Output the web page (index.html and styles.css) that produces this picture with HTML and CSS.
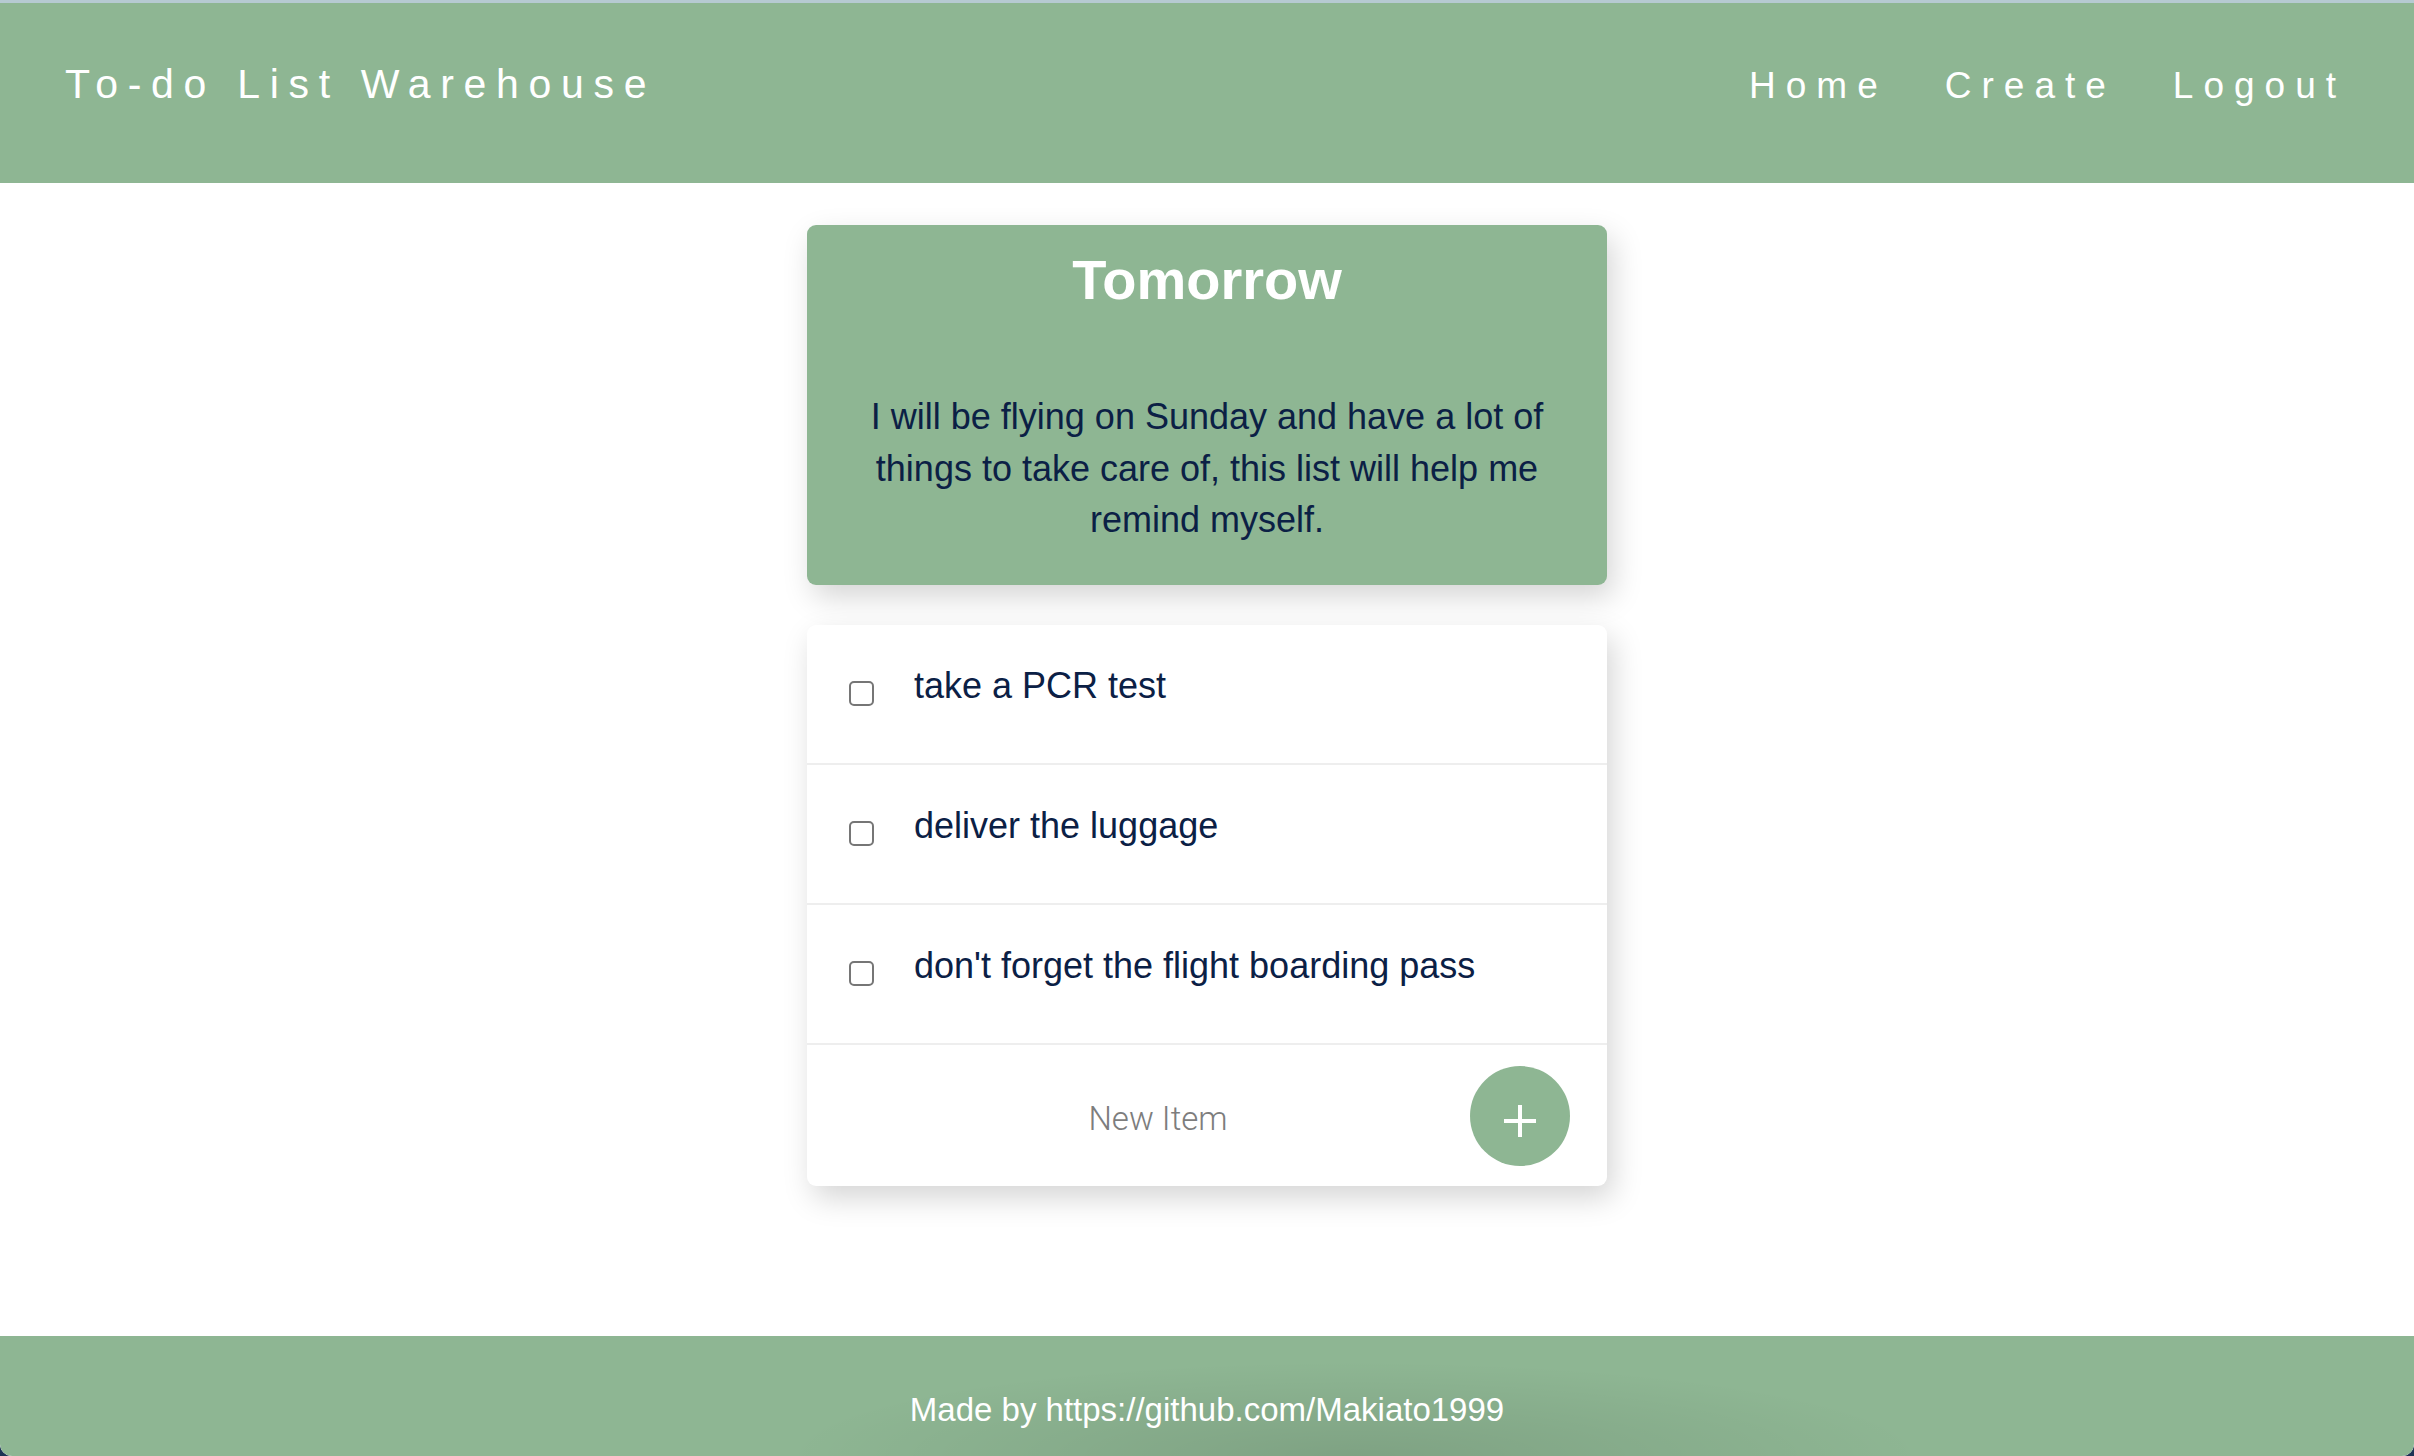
FILE: index.html
```html
<!DOCTYPE html>
<html lang="en">
<head>
<meta charset="utf-8">
<title>To-do List Warehouse</title>
<link rel="stylesheet" href="styles.css">
</head>
<body>
  <header class="navbar">
    <span class="brand">To-do List Warehouse</span>
    <nav class="nav">
      <a class="nav-link" href="#">Home</a>
      <a class="nav-link" href="#">Create</a>
      <a class="nav-link" href="#">Logout</a>
    </nav>
  </header>

  <main class="content">
    <section class="box heading">
      <h1 class="heading-title">Tomorrow</h1>
      <p class="heading-text">I will be flying on Sunday and have a lot of things to take care of, this list will help me remind myself.</p>
    </section>

    <section class="box list">
      <div class="item">
        <input class="check" type="checkbox">
        <p class="item-text">take a PCR test</p>
      </div>
      <div class="item">
        <input class="check" type="checkbox">
        <p class="item-text">deliver the luggage</p>
      </div>
      <div class="item">
        <input class="check" type="checkbox">
        <p class="item-text">don't forget the flight boarding pass</p>
      </div>
      <form class="new-item" onsubmit="return false;">
        <input class="new-input" type="text" name="newItem" placeholder="New Item" autocomplete="off">
        <button class="add-btn" type="submit" aria-label="Add">
          <svg class="add-icon" viewBox="0 0 100 100" width="100" height="100">
            <path d="M34 55 H66 M50 39 V71" stroke="#ffffff" stroke-width="4" fill="none"/>
          </svg>
        </button>
      </form>
    </section>
  </main>

  <footer class="footer">
    <p class="footer-text">Made by https://github.com/Makiato1999</p>
  </footer>
</body>
</html>
```

FILE: styles.css
```css
html {
  background: #1c3354;
}

body {
  margin: 0;
  min-height: 100vh;
  display: flex;
  flex-direction: column;
  background: #ffffff;
  font-family: "Liberation Sans", Arial, Helvetica, sans-serif;
  border-bottom-left-radius: 12px;
  border-bottom-right-radius: 12px;
  overflow: hidden;
}

/* ---------- header ---------- */
.navbar {
  box-sizing: border-box;
  height: 183px;
  border-top: 3px solid #b6cad2;
  background: #8eb693;
  display: flex;
  align-items: baseline;
  justify-content: space-between;
  padding: 61px 68px 0 65px;
}

.brand {
  color: #ffffff;
  font-size: 41px;
  line-height: 1;
  letter-spacing: 9.7px;
}

.nav {
  display: flex;
  align-items: baseline;
  gap: 57px;
}

.nav-link {
  color: #ffffff;
  text-decoration: none;
  font-size: 37px;
  line-height: 1;
  letter-spacing: 10px;
}

/* ---------- content ---------- */
.content {
  display: flex;
  flex-direction: column;
  align-items: center;
  gap: 40px;
  padding-top: 42px;
}

.box {
  width: 800px;
  border-radius: 9px;
  box-shadow: 6px 12px 30px rgba(0, 0, 0, 0.17);
}

.heading {
  box-sizing: border-box;
  background: #8eb693;
  text-align: center;
  padding: 21px 50px 39.5px 50px;
}

.heading-title {
  margin: 0 0 78px 0;
  color: #ffffff;
  font-size: 56px;
  font-weight: bold;
  line-height: 1.2;
}

.heading-text {
  margin: 0;
  color: #0b2045;
  font-size: 36px;
  line-height: 51.5px;
}

.list {
  background: #ffffff;
  overflow: hidden;
}

.item {
  box-sizing: border-box;
  height: 140px;
  border-bottom: 2px solid #eeeeee;
  display: flex;
  align-items: flex-start;
  padding-left: 42px;
}

.check {
  -webkit-appearance: none;
  appearance: none;
  box-sizing: border-box;
  margin: 56px 0 0 0;
  width: 25px;
  height: 25px;
  border: 2px solid #767676;
  border-radius: 5px;
  background: #ffffff;
  flex: none;
}

.item-text {
  margin: 41px 0 0 40px;
  color: #0b2045;
  font-size: 36px;
  line-height: 40px;
}

.new-item {
  box-sizing: border-box;
  height: 141px;
  margin: 0;
  display: flex;
  align-items: center;
  padding: 0 37px 0 39px;
}

.new-input {
  flex: 1;
  min-width: 0;
  border: none;
  outline: none;
  background: transparent;
  text-align: center;
  font-family: Roboto, "Liberation Sans", sans-serif;
  font-weight: 300;
  font-size: 33px;
  color: #333333;
  padding: 6px 0 0 0;
  height: 60px;
}

.new-input::placeholder {
  color: #7d7d7d;
  opacity: 1;
}

.add-btn {
  flex: none;
  width: 100px;
  height: 100px;
  border: none;
  border-radius: 50%;
  background: #8eb693;
  padding: 0;
  display: flex;
  align-items: center;
  justify-content: center;
  cursor: pointer;
}

.add-icon {
  display: block;
}

/* ---------- footer ---------- */
.footer {
  position: relative;
  box-sizing: border-box;
  margin-top: auto;
  height: 120px;
  background: #8eb693;
  padding-top: 55px;
  text-align: center;
  border-bottom-left-radius: 12px;
  border-bottom-right-radius: 12px;
  overflow: hidden;
}

.footer::after {
  content: "";
  position: absolute;
  left: 785px;
  width: 1140px;
  bottom: 0;
  height: 95px;
  background: radial-gradient(ellipse 50% 100% at 50% 100%, rgba(0, 0, 0, 0.11), rgba(0, 0, 0, 0) 100%);
  pointer-events: none;
}

.footer-text {
  position: relative;
  z-index: 1;
  margin: 0;
  color: #ffffff;
  font-size: 33px;
  line-height: 38px;
}
```
